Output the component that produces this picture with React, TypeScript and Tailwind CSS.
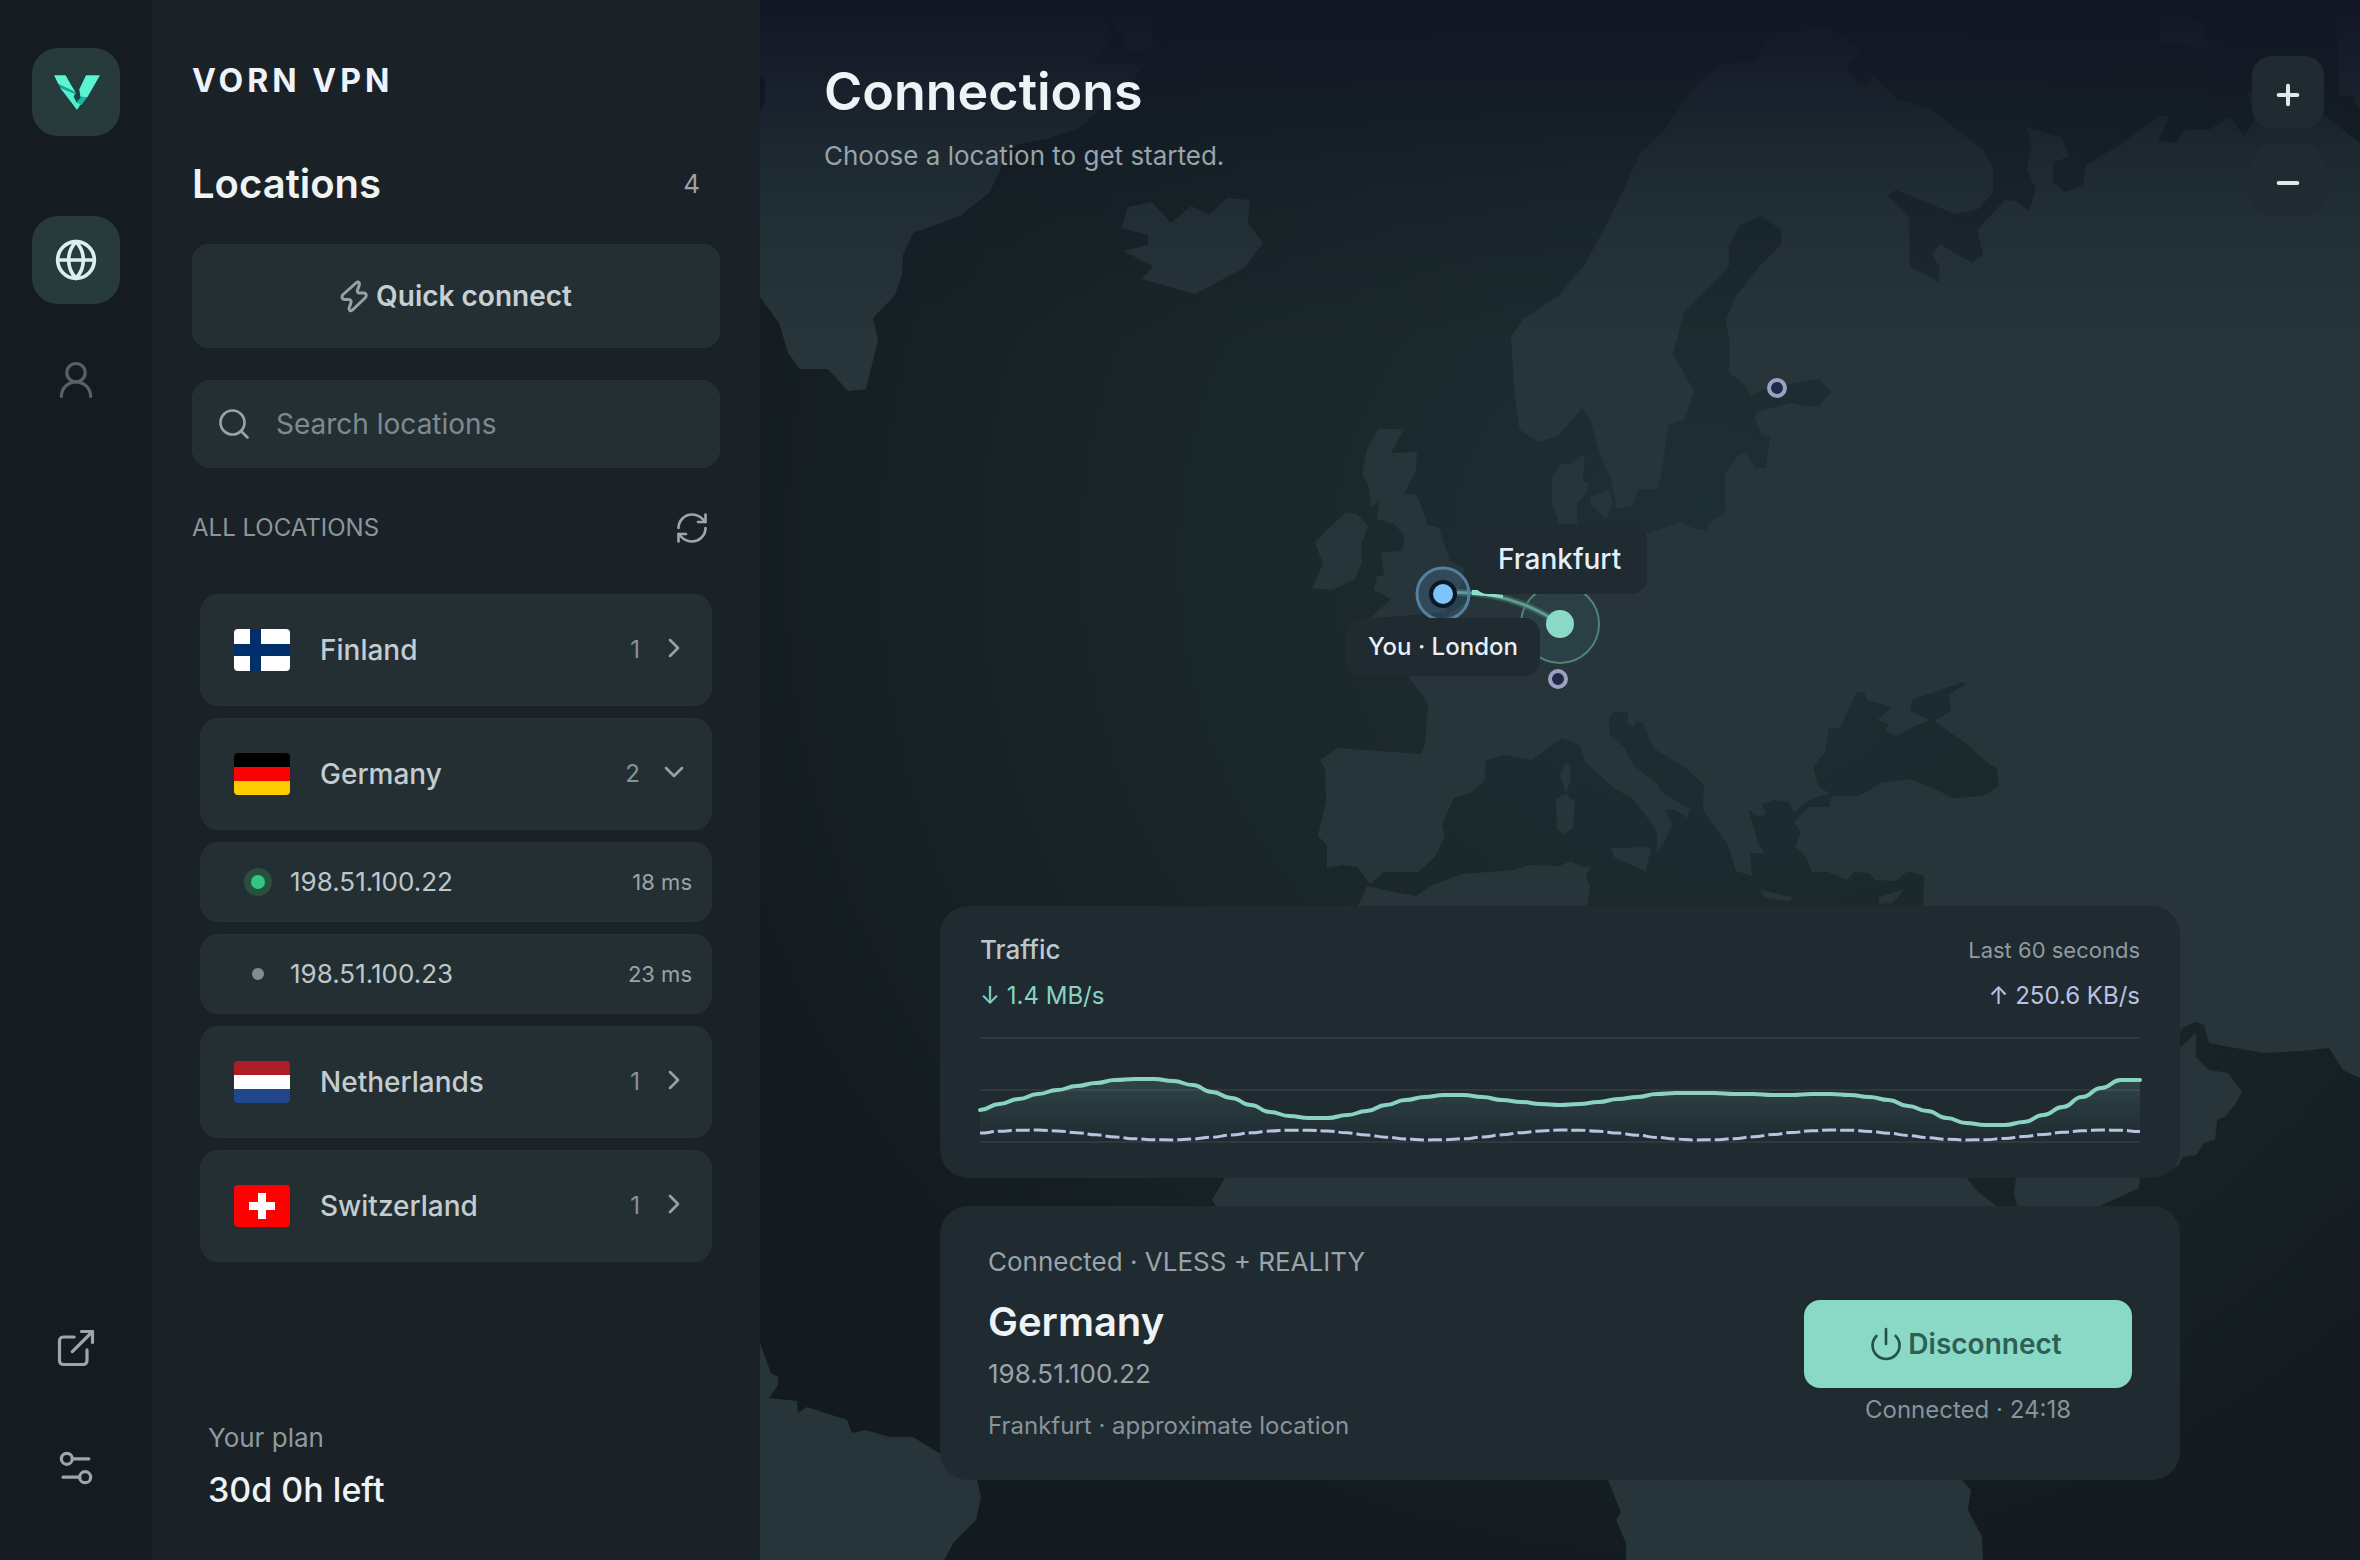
import type { ReactNode } from "react";
import {
  ChevronDown,
  ChevronRight,
  ExternalLink,
  Globe,
  Minus,
  Plus,
  Power,
  RefreshCw,
  Search,
  Settings2,
  UserRound,
} from "lucide-react";

const GREENLAND =
  "760,0 1144,0 1152,20 1153,43 1140,53 1128,50 1125,40 1107,17 1112,37 1094,63 1144,65 1135,78 1112,100 1094,115 1079,128 1046,139 1018,144 1005,153 999,173 989,193 960,216 913,233 903,255 902,275 895,295 873,318 878,340 866,389 848,391 828,369 800,369 788,353 779,323 760,297 760,113 765,100 765,80 760,77";

const EURASIA =
  "1538,442 1519,429 1514,386 1511,337 1523,319 1558,296 1585,264 1610,218 1641,152 1665,129 1695,86 1722,64 1755,62 1770,32 1813,30 1824,26 1843,36 1862,54 1846,66 1857,84 1865,86 1873,75 1898,100 1931,109 1983,150 1993,168 1993,193 1978,209 1955,214 1896,190 1888,195 1909,218 1910,266 1938,282 1940,268 1932,254 1940,244 1972,263 1983,254 1977,230 2005,200 2016,201 2029,211 2036,189 2027,170 2032,146 2026,127 2062,138 2069,157 2053,162 2053,182 2065,192 2083,186 2086,165 2120,145 2158,116 2170,116 2158,141 2176,143 2185,130 2208,130 2230,117 2244,136 2256,118 2247,93 2262,84 2300,92 2326,116 2360,143 " +
  "2360,1078 2343,1070 2329,1048 2301,1051 2264,1053 2241,1049 2209,1043 2204,1025 2196,1022 2182,1028 2176,1040 2181,1047 2196,1033 2196,1057 2209,1070 2228,1073 2242,1092 2236,1103 2225,1117 2217,1120 2215,1140 2204,1143 2196,1155 2183,1157 2179,1165 2157,1177 2140,1178 2139,1188 2113,1200 2098,1207 2030,1230 2017,1206 2014,1193 2016,1177 1924,920 " +
  "1923,906 1924,876 1908,871 1896,881 1875,880 1869,873 1854,872 1847,880 1828,872 1812,872 1806,857 1795,847 1801,833 1794,822 1809,807 1829,807 1832,796 1859,796 1881,783 1910,779 1925,785 1954,798 1983,796 1999,786 1997,769 1983,759 1968,745 1934,721 1951,711 1949,695 1967,683 1961,683 1934,692 1913,699 1910,711 1930,720 1915,726 1896,736 1886,731 1888,724 1877,720 1892,707 1867,700 1864,692 1856,693 1840,728 1829,728 1825,752 1813,767 1818,786 1830,794 1813,798 1794,812 1789,802 1774,800 1762,804 1766,815 1757,816 1748,809 1754,828 1757,841 1765,853 1750,853 1752,876 1736,871 1728,845 1703,810 1704,785 1687,769 1653,748 1643,723 1636,721 1633,727 1627,723 1628,712 1614,712 1609,719 1610,735 1624,747 1634,766 1657,783 1660,791 1690,809 1687,818 1673,809 1665,810 1672,824 1665,841 1657,852 1657,831 1634,800 1614,788 1585,762 1580,745 1562,738 1532,760 1505,755 1486,760 1484,781 1471,793 1454,798 1442,824 1445,836 1435,857 1418,872 1384,872 1370,884 1357,867 1343,865 1327,868 1327,845 1318,836 1326,800 1325,769 1320,760 1337,748 1421,754 1425,743 1428,704 1411,680 1395,660 1402,640 1440,622 1452,612 1470,600 1490,586 1530,560 " +
  "1559,523 1552,504 1552,476 1561,464 1571,464 1585,453 1583,480 1588,483 1588,492 1577,504 1577,540 1648,533 1682,522 1694,529 1707,530 1709,522 1725,514 1725,473 1738,456 1746,452 1755,468 1766,468 1770,437 1761,435 1755,418 1757,412 1791,403 1804,406 1819,406 1831,392 1819,379 1763,389 1751,396 1744,384 1729,373 1730,346 1726,320 1736,296 1758,268 1782,243 1781,230 1761,216 1740,225 1729,246 1729,266 1711,286 1684,312 1673,354 1694,391 1684,420 1668,425 1663,464 1658,489 1638,489 1632,507 1616,508 1612,482 1600,454 1591,421 1582,408 1558,436";

const AFRICA =
  "1358,906 1367,886 1394,892 1416,896 1430,886 1462,874 1513,870 1530,865 1559,866 1571,861 1583,867 1591,866 1586,876 1590,886 1587,906 1700,940 1900,940 1966,1177 1976,1190 1996,1206 2030,1300 1990,1420 1962,1480 1971,1490 1968,1510 1982,1537 1983,1560 1626,1560 1626,1543 1616,1520 1621,1512 1608,1480 1580,1400 1500,1320 1300,1300 1216,1206 1212,1200 1225,1178 1270,1060";

const SOUTH_AMERICA =
  "760,1343 771,1373 778,1377 778,1385 769,1398 797,1401 798,1413 807,1407 847,1420 852,1433 865,1430 890,1437 913,1437 939,1453 977,1480 981,1497 976,1520 954,1542 944,1560 760,1560";

const ISLANDS = [
  "1128,207 1152,202 1171,223 1191,206 1209,215 1227,198 1250,200 1248,223 1263,243 1244,268 1195,294 1142,279 1153,266 1123,251 1148,245 1148,235 1121,228",
  "1378,429 1404,429 1391,453 1417,452 1416,470 1404,494 1417,495 1428,525 1439,528 1450,561 1465,568 1462,583 1445,612 1401,616 1370,618 1391,599 1374,590 1377,576 1384,575 1381,552 1403,551 1404,535 1394,524 1377,519 1379,500 1371,508 1369,487 1362,473 1367,449",
  "1346,512 1357,514 1368,526 1361,545 1362,562 1355,579 1332,590 1312,588 1323,564 1315,542",
  "1609,490 1613,504 1606,519 1590,504 1591,496",
  "1569,762 1571,779 1566,793 1560,776 1563,767",
  "1556,798 1566,794 1575,802 1573,828 1564,834 1557,829",
  "1611,848 1651,847 1646,872 1614,857",
  "1760,890 1794,897 1789,901 1765,898",
  "1879,897 1905,889 1892,903 1879,904",
  "2131,0 2188,0 2188,14 2202,25 2210,48 2161,43 2158,21",
  "2335,0 2360,0 2360,112 2353,96 2339,95 2337,21",
];

/* One sample per second, in chart units above the base line. */
const DOWNLOAD = [
  32, 38, 43, 48, 52, 56, 59, 62, 63, 63, 61, 57, 50, 44, 37, 30, 26, 24, 24, 27, 31, 37, 42, 45, 47, 47, 45,
  42, 40, 38, 37, 38, 40, 43, 45, 48, 49, 49, 49, 48, 48, 47, 47, 48, 48, 47, 45, 42, 36, 31, 24, 19, 17, 17,
  20, 27, 35, 45, 54, 62, 62,
];
const UPLOAD = DOWNLOAD.map((_, i) => 7 + 5 * Math.cos(((i - 2.6) * 2 * Math.PI) / 13.9));

const CHART_WIDTH = 1160;
const CHART_BASE = 106;

function curve(samples: number[]) {
  const step = CHART_WIDTH / (samples.length - 1);
  return samples
    .map((value, i) => {
      const x = i * step;
      const y = CHART_BASE - value;
      if (i === 0) return `M${x} ${y}`;
      const mid = x - step / 2;
      return `C${mid} ${CHART_BASE - samples[i - 1]} ${mid} ${y} ${x} ${y}`;
    })
    .join(" ");
}

function Logo() {
  return (
    <svg viewBox="18 18 264 264" className="size-22" aria-hidden="true">
      <path
        d="M84 100H119L134 127L150 150L156 160L160 143L180 100H222L153 205Z"
        fill="#0f4a49"
        stroke="#173c3e"
        strokeWidth="6"
        strokeLinejoin="round"
      />
      <path d="M84 100H119L134 127L149 151L120 137L97 126Z" fill="#5cf5d2" />
      <path d="M97 126L120 137L151 152L146 160L108 147Z" fill="#1fa899" />
      <path d="M103 138L146 156L143 164L152 182L166 184L153 204Z" fill="#56efcd" />
      <path d="M180 100H222L184 166L163 164L160 142Z" fill="#5cf5d2" />
      <path d="M184 166L166 164L151 181L166 190Z" fill="#1cb5a2" />
    </svg>
  );
}

function BoltIcon() {
  return (
    <svg
      viewBox="0 0 28 33"
      className="h-[33px] w-7 shrink-0"
      fill="none"
      stroke="#94a1a5"
      strokeWidth="3"
      strokeLinejoin="round"
      aria-hidden="true"
    >
      <path d="M16 3L2.5 15Q1 19 4.500 19.500L9 19.500Q11.500 20 11 22.500L9 28.500Q9.500 32 12.500 30L25.500 17.500Q27.500 13.500 24 13L19 13Q17 12.500 17.500 10L19.500 4.500Q19.500 .5 16 3Z" />
    </svg>
  );
}

function RailButton({ label, active, children }: { label: string; active?: boolean; children: ReactNode }) {
  return (
    <button
      type="button"
      aria-label={label}
      className={`flex size-22 items-center justify-center rounded-[26px] ${active ? "bg-[#273a3c] text-[#d9f0ef]" : ""}`}
    >
      {children}
    </button>
  );
}

function Flag({ code }: { code: string }) {
  return (
    <svg viewBox="0 0 56 42" className="h-[42px] w-14 shrink-0 rounded" aria-hidden="true">
      {code === "fi" && (
        <>
          <path fill="#fff" d="M0 0h56v42H0z" />
          <path fill="#002f6c" d="M0 15h56v12H0zM16 0h11v42H16z" />
        </>
      )}
      {code === "de" && (
        <>
          <path fill="#000" d="M0 0h56v14H0z" />
          <path fill="#f00" d="M0 14h56v14H0z" />
          <path fill="#fc0" d="M0 28h56v14H0z" />
        </>
      )}
      {code === "nl" && (
        <>
          <path fill="#ae1c28" d="M0 0h56v14H0z" />
          <path fill="#fff" d="M0 14h56v14H0z" />
          <path fill="#21468b" d="M0 28h56v14H0z" />
        </>
      )}
      {code === "ch" && (
        <>
          <path fill="#f00" d="M0 0h56v42H0z" />
          <path fill="#fff" d="M24 8h8v26h-8zM15 17h26v8H15z" />
        </>
      )}
    </svg>
  );
}

function CountryRow({ code, name, count, open }: { code: string; name: string; count: number; open?: boolean }) {
  const Chevron = open ? ChevronDown : ChevronRight;
  return (
    <button
      type="button"
      aria-expanded={!!open}
      className="flex h-28 w-full items-center rounded-[18px] border border-[#273237] bg-[#242f34] pr-[21px] pl-[33px]"
    >
      <Flag code={code} />
      <span className="ml-[30px] text-[28px] leading-9 font-medium text-[#c3cdd0]">{name}</span>
      <span className="ml-auto text-[24px] leading-8 text-[#87939a]">{count}</span>
      <Chevron className="mb-1 ml-[18px] size-8 text-[#95a1a6]" strokeWidth={2} />
    </button>
  );
}

function ServerRow({ ip, ping, active }: { ip: string; ping: string; active?: boolean }) {
  return (
    <button
      type="button"
      className="flex h-20 w-full items-center rounded-[18px] border border-[#273237] bg-[#242f34] pr-[19px] pl-[43px]"
    >
      <span className={`flex size-7 items-center justify-center rounded-full ${active ? "bg-[#28503f]" : ""}`}>
        <span className={`rounded-full ${active ? "size-3.5 bg-[#35c77f]" : "size-3 bg-[#7f8d92]"}`} />
      </span>
      <span className="ml-[18px] text-[26px] leading-8 text-[#bcc7cb]">{ip}</span>
      <span className="ml-auto text-[22px] leading-8 text-[#98a4a9]">{ping}</span>
    </button>
  );
}

function WorldMap() {
  return (
    <svg
      viewBox="760 0 1600 1560"
      preserveAspectRatio="xMidYMid slice"
      className="absolute inset-0 h-full w-full"
      role="img"
      aria-label="Map of server locations"
    >
      <defs>
        <radialGradient id="sea" gradientUnits="userSpaceOnUse" cx="1700" cy="560" r="1060">
          <stop offset="0" stopColor="#1e2f34" />
          <stop offset="0.35" stopColor="#1b292d" />
          <stop offset="0.7" stopColor="#172226" />
          <stop offset="1" stopColor="#131a20" />
        </radialGradient>
        <linearGradient id="sky" x1="0" y1="0" x2="0" y2="1">
          <stop offset="0" stopColor="#111624" />
          <stop offset="0.2" stopColor="#111624" stopOpacity="0.75" />
          <stop offset="0.6" stopColor="#111a24" stopOpacity="0.3" />
          <stop offset="1" stopColor="#111a24" stopOpacity="0" />
        </linearGradient>
      </defs>
      <rect x="760" width="1600" height="1560" fill="url(#sea)" />
      <g fill="#27353b">
        <polygon points={GREENLAND} />
        <polygon points={EURASIA} />
        <polygon points={AFRICA} />
        <polygon points={SOUTH_AMERICA} />
        {ISLANDS.map((points) => (
          <polygon key={points} points={points} />
        ))}
      </g>
      <rect x="760" width="1600" height="340" fill="url(#sky)" />

      <circle cx="1560" cy="624" r="39" fill="#2b4044" stroke="#4f8379" strokeWidth="2" />
      <path d="M1443 593Q1508 588 1560 624" fill="none" stroke="#3d6a66" strokeWidth="7" opacity="0.6" />
      <path d="M1443 593Q1508 588 1560 624" fill="none" stroke="#5f9d91" strokeWidth="3" />
      <path d="M1472 590L1480 590L1486 593L1503 595L1503 598L1486 596L1472 595Z" fill="#8ae0c8" />
      <circle cx="1560" cy="624" r="14" fill="#8ad8c6" />
      <circle cx="1443" cy="594" r="26" fill="#5a9bd0" fillOpacity="0.2" stroke="#557f9f" strokeWidth="3" />
      <circle cx="1443" cy="594" r="14" fill="#0d1726" />
      <circle cx="1443" cy="594" r="10" fill="#7cc4fb" />
      <g fill="#1f2a4a" stroke="#9aa2bf" strokeWidth="4">
        <circle cx="1777" cy="388" r="8" />
        <circle cx="1558" cy="679" r="8" />
      </g>
    </svg>
  );
}

function TrafficChart() {
  const download = curve(DOWNLOAD);
  return (
    <svg
      viewBox="0 0 1160 110"
      preserveAspectRatio="none"
      className="mt-6 h-[110px] w-full overflow-visible"
      role="img"
      aria-label="Traffic over the last 60 seconds"
    >
      <defs>
        <linearGradient id="fill" gradientUnits="userSpaceOnUse" x1="0" y1="40" x2="0" y2="106">
          <stop offset="0" stopColor="#8ad8c6" stopOpacity="0.16" />
          <stop offset="1" stopColor="#8ad8c6" stopOpacity="0" />
        </linearGradient>
      </defs>
      <path d="M0 2H1160M0 54H1160M0 106H1160" stroke="#2d393f" strokeWidth="2" />
      <path d={`${download} V106 H0 Z`} fill="url(#fill)" />
      <path d={download} fill="none" stroke="#8ad3c2" strokeWidth="4" strokeLinecap="round" />
      <path d={curve(UPLOAD)} fill="none" stroke="#b9c2e3" strokeWidth="3" strokeDasharray="14 4" />
    </svg>
  );
}

export default function App() {
  return (
    <div className="flex min-h-screen bg-[#151b21] font-['Inter',sans-serif] text-[#eef4f5]">
      <nav aria-label="Main" className="flex w-38 shrink-0 flex-col items-center bg-[#151b21] py-12 text-[#9aa8ac]">
        <a href="#home" aria-label="Vorn VPN" className="mb-20 rounded-[26px] bg-[#273a3c]">
          <Logo />
        </a>
        <div className="flex flex-col gap-8">
          <RailButton label="Locations" active>
            <Globe className="size-11" strokeWidth={2} />
          </RailButton>
          <RailButton label="Account">
            <UserRound className="size-11 text-[#566267]" strokeWidth={1.75} />
          </RailButton>
        </div>
        <div className="mt-auto flex flex-col gap-8">
          <RailButton label="Open website">
            <ExternalLink className="size-11" strokeWidth={1.75} />
          </RailButton>
          <RailButton label="Settings">
            <Settings2 className="size-11" strokeWidth={1.75} />
          </RailButton>
        </div>
      </nav>

      <aside className="flex w-[608px] shrink-0 flex-col bg-[#1a2127] px-10 pt-15 pb-12">
        <p className="text-[32px] leading-[42px] font-bold tracking-[4px] text-[#eef2fb]">VORN VPN</p>
        <div className="mt-[58px] flex items-center justify-between pr-5">
          <h2 className="text-[40px] leading-12 font-semibold">Locations</h2>
          <span className="text-[26px] leading-8 text-[#98a4a9]">4</span>
        </div>
        <button
          type="button"
          className="mt-9 flex h-26 items-center justify-center gap-2 rounded-2xl border border-[#273237] bg-[#242f34] text-[28px] leading-9 font-semibold text-[#c6d0d3]"
        >
          <BoltIcon />
          Quick connect
        </button>
        <label className="mt-8 flex h-22 items-center gap-6 rounded-[18px] border border-[#273237] bg-[#242f34] pr-6 pl-[23px]">
          <Search className="size-9 shrink-0 text-[#95a5a8]" strokeWidth={1.75} />
          <input
            type="search"
            aria-label="Search locations"
            placeholder="Search locations"
            className="w-full bg-transparent text-[28px] leading-9 outline-none placeholder:text-[#7f8a90]"
          />
        </label>
        <div className="mt-7 flex h-16 items-center justify-between pr-2.5">
          <h3 className="text-[24px] leading-8 text-[#8a969b]">ALL LOCATIONS</h3>
          <button type="button" aria-label="Refresh locations" className="text-[#9aa8ac]">
            <RefreshCw className="size-9" strokeWidth={1.75} />
          </button>
        </div>
        <div className="mx-2 mt-8.5 flex flex-col gap-3">
          <CountryRow code="fi" name="Finland" count={1} />
          <CountryRow code="de" name="Germany" count={2} open />
          <ServerRow ip="198.51.100.22" ping="18 ms" active />
          <ServerRow ip="198.51.100.23" ping="23 ms" />
          <CountryRow code="nl" name="Netherlands" count={1} />
          <CountryRow code="ch" name="Switzerland" count={1} />
        </div>
        <div className="mt-auto px-4">
          <p className="text-[26px] leading-8 text-[#8f9a9f]">Your plan</p>
          <p className="mt-3.5 text-[34px] leading-11 font-medium">30d 0h left</p>
        </div>
      </aside>

      <main className="relative flex min-w-0 flex-1 flex-col">
        <WorldMap />
        <span className="absolute top-[524px] left-[712px] rounded-2xl bg-[#1f2a31] px-[26px] py-[17px] text-[28px] leading-9 font-medium text-[#e6eff8]">
          Frankfurt
        </span>
        <span className="absolute top-[618px] left-[586px] rounded-2xl bg-[#1f2a31] px-[22px] py-[13px] text-[24px] leading-8 font-medium text-[#e6eff8]">
          You · London
        </span>

        <header className="relative flex justify-between pt-14 pr-9 pl-16">
          <div className="pt-1">
            <h1 className="text-[52px] leading-16 font-semibold">Connections</h1>
            <p className="mt-4 text-[26px] leading-8 text-[#98a4aa]">Choose a location to get started.</p>
          </div>
          <div className="flex flex-col gap-4 text-[#dfe9ee]">
            <button
              type="button"
              aria-label="Zoom in"
              className="flex size-18 items-center justify-center rounded-[20px] bg-[#1f2a31] pt-1.5"
            >
              <Plus className="size-8" strokeWidth={3} />
            </button>
            <button
              type="button"
              aria-label="Zoom out"
              className="flex size-18 items-center justify-center rounded-[20px] bg-[#1f2a31] pt-1.5"
            >
              <Minus className="size-8" strokeWidth={3} />
            </button>
          </div>
        </header>

        <div className="relative mx-auto mt-auto flex w-full max-w-[1240px] flex-col gap-7 pb-20">
          <section className="rounded-[28px] bg-[#1f2a31] px-10 pt-7 pb-8">
            <div className="flex justify-between leading-8">
              <h2 className="text-[26px] font-medium text-[#bcc7cb]">Traffic</h2>
              <span className="text-[22px] text-[#8f9ba0]">Last 60 seconds</span>
            </div>
            <div className="mt-3.5 flex justify-between text-[24px] leading-8">
              <span className="text-[#8ad3c2]">↓ 1.4 MB/s</span>
              <span className="text-[#b9c2e3]">↑ 250.6 KB/s</span>
            </div>
            <TrafficChart />
          </section>

          <section className="flex items-end justify-between rounded-[28px] bg-[#1f2a31] px-12 pt-10 pb-[38px]">
            <div>
              <p className="text-[26px] leading-8 text-[#98a4aa]">Connected · VLESS + REALITY</p>
              <h2 className="mt-5 text-[40px] leading-12 font-semibold">Germany</h2>
              <p className="mt-3 text-[26px] leading-8 text-[#98a4aa]">198.51.100.22</p>
              <p className="mt-5 text-[24px] leading-8 text-[#87939a]">Frankfurt · approximate location</p>
            </div>
            <div className="flex w-[328px] flex-col items-center gap-1.5 pb-4">
              <button
                type="button"
                className="flex h-22 w-full items-center justify-center gap-1 rounded-2xl bg-[#8ad8c6] text-[28px] leading-9 font-semibold text-[#2d5f55]"
              >
                <Power className="-ml-1.5 size-9 text-[#24524a]" strokeWidth={1.75} />
                Disconnect
              </button>
              <p className="text-[24px] leading-8 text-[#87939a]">Connected · 24:18</p>
            </div>
          </section>
        </div>
      </main>
    </div>
  );
}
